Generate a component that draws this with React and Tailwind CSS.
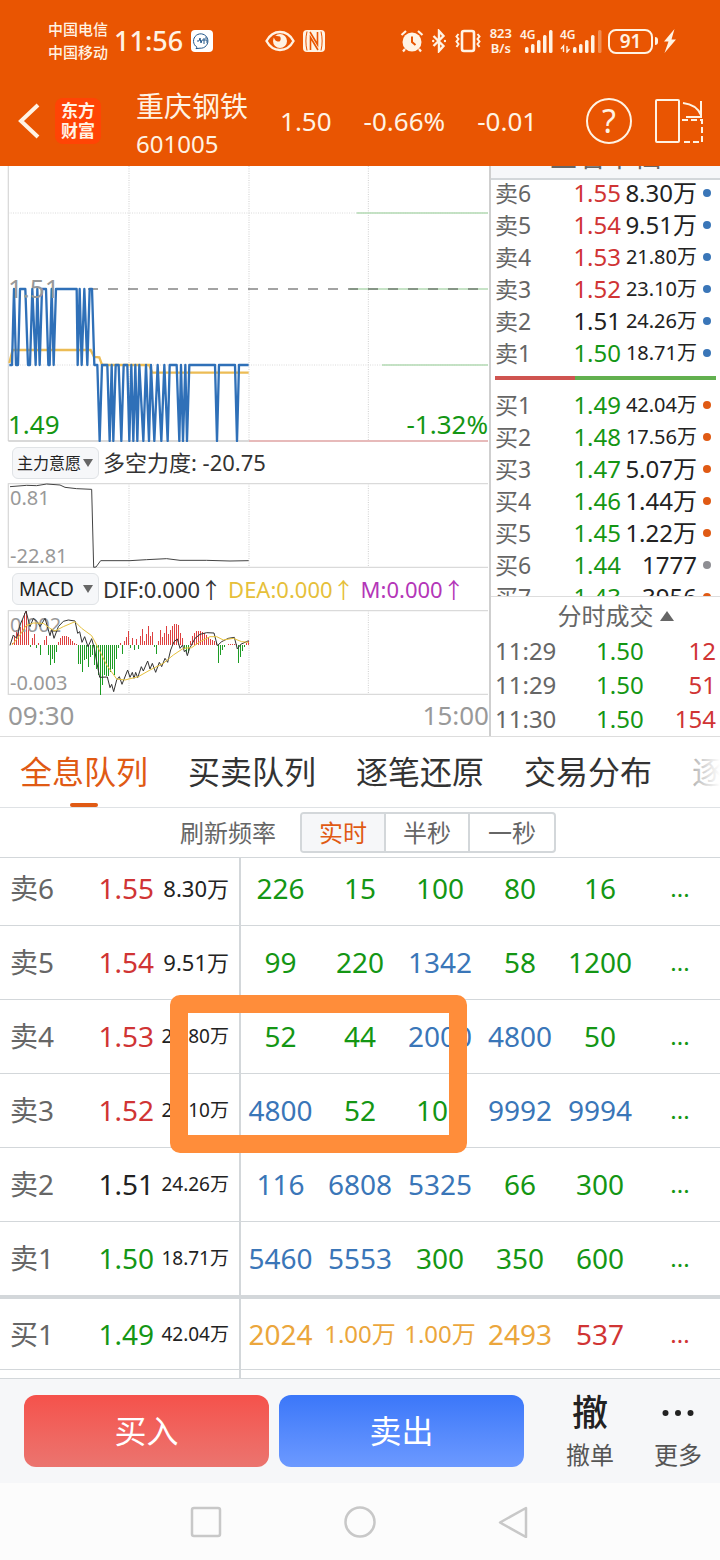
import React, { useState } from 'react';

const TONE = {
  up: 'text-[#d03434]',
  down: 'text-[#149614]',
  flat: 'text-[#222222]',
  big: 'text-[#3a76b8]',
  huge: 'text-[#eba63c]'
};

const ASKS = [
  { name: '卖6', price: '1.55', tone: 'up', volume: '8.30万' },
  { name: '卖5', price: '1.54', tone: 'up', volume: '9.51万' },
  { name: '卖4', price: '1.53', tone: 'up', volume: '21.80万' },
  { name: '卖3', price: '1.52', tone: 'up', volume: '23.10万' },
  { name: '卖2', price: '1.51', tone: 'flat', volume: '24.26万' },
  { name: '卖1', price: '1.50', tone: 'down', volume: '18.71万' }
];

const BIDS = [
  { name: '买1', price: '1.49', tone: 'down', volume: '42.04万' },
  { name: '买2', price: '1.48', tone: 'down', volume: '17.56万' },
  { name: '买3', price: '1.47', tone: 'down', volume: '5.07万' },
  { name: '买4', price: '1.46', tone: 'down', volume: '1.44万' },
  { name: '买5', price: '1.45', tone: 'down', volume: '1.22万' },
  { name: '买6', price: '1.44', tone: 'down', volume: '1777', idle: true },
  { name: '买7', price: '1.43', tone: 'down', volume: '3956' }
];

const TICKS = [
  ['11:29', '1.50', '12'],
  ['11:29', '1.50', '51'],
  ['11:30', '1.50', '154']
];

const QUEUES = {
  卖6: [['226', 'down'], ['15', 'down'], ['100', 'down'], ['80', 'down'], ['16', 'down'], ['...', 'down']],
  卖5: [['99', 'down'], ['220', 'down'], ['1342', 'big'], ['58', 'down'], ['1200', 'down'], ['...', 'down']],
  卖4: [['52', 'down'], ['44', 'down'], ['2000', 'big'], ['4800', 'big'], ['50', 'down'], ['...', 'down']],
  卖3: [['4800', 'big'], ['52', 'down'], ['100', 'down'], ['9992', 'big'], ['9994', 'big'], ['...', 'down']],
  卖2: [['116', 'big'], ['6808', 'big'], ['5325', 'big'], ['66', 'down'], ['300', 'down'], ['...', 'down']],
  卖1: [['5460', 'big'], ['5553', 'big'], ['300', 'down'], ['350', 'down'], ['600', 'down'], ['...', 'down']],
  买1: [['2024', 'huge'], ['1.00万', 'huge'], ['1.00万', 'huge'], ['2493', 'huge'], ['537', 'up'], ['...', 'up']]
};

const TABS = ['全息队列', '买卖队列', '逐笔还原', '交易分布', '逐'];
const RATES = ['实时', '半秒', '一秒'];

// price levels in chart units: 1.51, 1.50, 1.49
const T = 372;
const M = 600;
const B = 828;

const PRICE_POINTS = [
  [28, M], [36, M], [42, T], [48, M], [54, M], [60, T], [76, T], [84, M], [90, M], [97, T], [107, M], [112, T],
  [119, M], [126, T], [138, T], [145, M], [149, M], [155, T], [161, M], [168, T], [230, T], [233, M], [239, T],
  [245, M], [253, T], [262, M], [269, T], [276, T], [283, M], [292, M], [299, B], [306, M], [322, M], [329, B],
  [335, M], [340, B], [347, M], [356, M], [364, B], [371, M], [382, M], [388, B], [394, M], [400, B], [406, M],
  [412, B], [418, M], [430, B], [438, M], [447, B], [453, M], [463, B], [473, M], [484, B], [493, M], [503, B],
  [509, M], [530, M], [538, B], [543, M], [549, B], [556, M], [561, B], [568, M], [645, M], [651, B], [657, M],
  [705, M], [711, B], [717, M], [746, M]
];

const AVERAGE_POINTS = [
  [28, 594], [34, 570], [38, 555], [272, 555], [282, 576], [298, 577], [306, 600], [448, 600], [456, 623], [746, 623]
];

const FORCE_POINTS = [
  [30, 35], [80, 31], [110, 32], [140, 27], [180, 30], [195, 37], [230, 41], [275, 43], [281, 277], [288, 276],
  [302, 257], [390, 257], [440, 254], [500, 251], [540, 256], [620, 256], [690, 258], [746, 257]
];

const MACD_BARS = [
  8, 28, 46, 40, 56, 76, 96, 102, 58, -6, 22, 34, -8, 8, -28, 0, 15, 28, -28, -58, -40, -54, -20, 10, 22, 27, 28, 28,
  24, 20, 12, 8, 4, -55, -56, -80, -45, -40, -66, -35, -30, -60, -72, -90, -148, -120, -90, -92, -92, -80, -70, -88,
  -42, -8, 8, -26, 12, 25, 42, -8, 22, -14, 18, -12, 28, 50, 12, 34, 58, 28, 40, -6, -25, 12, 45, 25, 38, 58, 35, 45,
  58, 63, 64, 62, 38, 22, -12, -20, -24, 12, 28, 38, 42, 43, 42, 40, 36, 32, 26, 20, 16, 12, 8, -52, -30, -14, -4, 2,
  4, 5, 5, 5, 4, -52, -35, -16, -6, 8, 12
];

const DIF_POINTS = [
  [30, 511], [40, 480], [50, 490], [60, 450], [78, 408], [90, 455], [100, 430], [112, 440], [120, 455], [135, 430],
  [150, 482], [155, 462], [162, 490], [175, 455], [190, 439], [205, 435], [225, 438], [233, 475], [239, 470],
  [246, 502], [254, 485], [264, 515], [275, 491], [283, 520], [290, 560], [299, 607], [322, 606], [330, 638],
  [335, 628], [341, 650], [350, 615], [358, 605], [366, 628], [383, 585], [390, 607], [397, 592], [402, 610],
  [407, 592], [413, 608], [424, 575], [430, 588], [443, 558], [450, 582], [457, 565], [467, 592], [478, 562],
  [485, 575], [495, 550], [503, 562], [512, 525], [522, 500], [532, 492], [540, 520], [548, 510], [553, 530],
  [557, 525], [562, 542], [568, 522], [585, 490], [600, 478], [620, 473], [642, 474], [652, 512], [665, 500],
  [685, 490], [703, 487], [712, 522], [722, 508], [746, 497]
];

const DEA_POINTS = [
  [36, 510], [60, 480], [78, 452], [100, 444], [130, 445], [150, 460], [165, 468], [190, 455], [225, 440],
  [245, 460], [275, 482], [295, 520], [320, 570], [350, 612], [375, 615], [415, 605], [450, 585], [490, 565],
  [520, 540], [550, 520], [575, 518], [600, 500], [630, 485], [650, 485], [670, 495], [700, 490], [725, 500],
  [746, 502]
];

const toPoints = (list) => list.map((p) => p.join(',')).join(' ');

function StatusBar() {
  return (
    <div className="flex h-[82px] items-center pl-12 pr-11">
      <div className="text-[15px] leading-[23px] font-medium">
        <p>中国电信</p>
        <p>中国移动</p>
      </div>
      <span className="ml-1.5 text-[27px] font-medium">11:56</span>
      <svg className="ml-2 size-[22px]" viewBox="0 0 22 22" fill="none">
        <rect width="22" height="22" rx="4" fill="#fff" />
        <path d="M6 17.2A7.2 7.2 0 1 1 9 18.2L5 18.6Z" stroke="#24588a" strokeWidth="1" />
        <path d="M6 11h2l1-3 1 5 1-3h1M13 8v6M12 10h4v3M15 7v2" stroke="#24588a" strokeWidth="1" />
      </svg>

      <svg className="ml-[52px] h-[22px] w-[30px]" viewBox="0 0 30 22" fill="none">
        <path d="M1.5 11C5 4.500 10 2 15 2s10 2.500 13.500 9C25 17.500 20 20 15 20S5 17.500 1.500 11Z" stroke="currentColor" strokeWidth="2.400" />
        <circle cx="15" cy="11" r="7" fill="currentColor" />
        <path d="M9 5.500a5 5 0 0 0 3.500 6c3 .8 4-2.500 2.500-5Z" fill="#e95502" />
      </svg>
      <svg className="ml-2 size-[22px]" viewBox="0 0 22 22" fill="none">
        <rect width="22" height="22" rx="4" fill="currentColor" />
        <path d="M7.500 20V7.500L15 20M7 2l7.500 12.500V2" stroke="#e95502" strokeWidth="1.600" />
        <path d="M4 1.500c-1.500 6-1.500 13 0 19M18 1.500c1.500 6 1.500 13 0 19" stroke="#e95502" strokeWidth="1" />
      </svg>

      <svg className="ml-auto size-6" viewBox="0 0 24 24" fill="none">
        <circle cx="12" cy="13" r="9.500" fill="currentColor" />
        <path d="M12 7.500V13l3.500 3" stroke="#e95502" strokeWidth="2" />
        <path d="M1.500 6 6 2M22.500 6 18 2M5 20l-2 2.500M19 20l2 2.500" stroke="currentColor" strokeWidth="2.200" />
      </svg>
      <svg className="ml-2 h-6 w-3.5" viewBox="0 0 14 24" fill="none">
        <path d="M1.500 7l10 10L7 22V2l4.500 5-10 10" stroke="currentColor" strokeWidth="2.400" />
        <circle cx="13" cy="12" r="1.200" fill="currentColor" />
        <circle cx="1.200" cy="12" r="1.200" fill="currentColor" />
      </svg>
      <svg className="ml-2 h-6 w-7" viewBox="0 0 28 24" fill="none" stroke="currentColor">
        <rect x="8" y="2" width="12" height="20" rx="2" strokeWidth="2.600" />
        <path d="M4.500 5 2.500 7.500l2 2.500-2 2.500 2 2.500-2 3M23.500 5l2 2.500-2 2.500 2 2.500-2 2.500 2 3" strokeWidth="2" />
      </svg>
      <div className="ml-2 text-center text-[13px] leading-[15px] font-semibold">
        <p>823</p>
        <p>B/s</p>
      </div>
      <div className="relative ml-2 h-6 w-[34px]">
        <span className="absolute left-0 top-0 text-[12px] leading-[12px] font-semibold">4G</span>
        <svg className="size-full" viewBox="0 0 34 24" fill="currentColor">
          <rect x="5" y="18" width="3.500" height="6" rx="1.500" />
          <rect x="11" y="15" width="3.500" height="9" rx="1.500" />
          <rect x="17" y="11" width="3.500" height="13" rx="1.500" />
          <rect x="23" y="6" width="3.500" height="18" rx="1.500" />
          <rect x="29" y="1" width="3.500" height="23" rx="1.500" />
        </svg>
      </div>
      <div className="relative ml-1.5 h-6 w-[42px]">
        <span className="absolute left-0 top-0 text-[12px] leading-[12px] font-semibold">4G</span>
        <svg className="size-full" viewBox="0 0 42 24" fill="currentColor">
          <path d="M3.500 23v-6l-2.500 3M7 17v6l2.500-3" stroke="currentColor" strokeWidth="1.400" fill="none" />
          <rect x="13" y="18" width="3.500" height="6" rx="1.500" />
          <rect x="19" y="15" width="3.500" height="9" rx="1.500" />
          <rect x="25" y="11" width="3.500" height="13" rx="1.500" />
          <rect x="31" y="6" width="3.500" height="18" rx="1.500" />
          <rect x="38" y="1" width="3.500" height="23" rx="1.500" opacity="0.35" />
        </svg>
      </div>
      <span className="ml-1.5 flex h-[25px] w-[45px] items-center justify-center rounded-[8px] border-2 border-current text-[19px] leading-[20px] font-semibold">
        91
      </span>
      <span className="ml-0.5 h-2 w-[3px] rounded-r bg-current" />
      <svg className="ml-1.5 h-6 w-3" viewBox="0 0 12 24" fill="currentColor">
        <path d="M10.500 0 0 12.500h4.500L0.500 24 12 10.500H7.500Z" />
      </svg>
    </div>
  );
}

function TitleBar() {
  return (
    <div className="flex items-center pl-[18px] pr-4 pb-1.5 h-[84px]">
      <button type="button" aria-label="返回">
        <svg className="h-9 w-[22px]" viewBox="0 0 22 36" fill="none">
          <path d="M20 2 3 18l17 16" stroke="currentColor" strokeWidth="4" />
        </svg>
      </button>
      <div className="ml-[15px] grid size-[46px] place-content-center rounded-[8px] bg-[#ff4405] text-[17px] leading-[20px] font-bold">
        <p>东方</p>
        <p>财富</p>
      </div>
      <div className="ml-[35px] pt-2">
        <h1 className="text-[28px] leading-[38px]">重庆钢铁</h1>
        <p className="text-[24px] leading-[38px]">601005</p>
      </div>
      <div className="ml-8 flex gap-8 text-[26px]">
        <span>1.50</span>
        <span>-0.66%</span>
        <span>-0.01</span>
      </div>
      <button type="button" aria-label="帮助" className="ml-auto flex size-[46px] items-center justify-center rounded-full border-2 border-current text-[32px] leading-none">
        ?
      </button>
      <button type="button" aria-label="横屏" className="ml-[22px]">
        <svg className="h-[46px] w-[50px]" viewBox="0 0 50 46" fill="none" stroke="currentColor" strokeWidth="2">
          <rect x="2" y="2" width="23" height="42" rx="1" />
          <path d="M29 5c9 1 15 5 18 12M47 3v16H32" />
          <path d="M28 22h20v22H28" strokeDasharray="6 3" />
        </svg>
      </button>
    </div>
  );
}

function ChartGrid({ top, bottom }) {
  return (
    <g stroke="#cfcfcf" strokeWidth="3">
      <path d={`M387 ${top}V${bottom}M747 ${top}V${bottom}M1105 ${top}V${bottom}`} strokeDasharray="3 4" />
      <path d={`M25 ${top}V${bottom}`} stroke="#dadada" strokeWidth="4" />
    </g>
  );
}

function PriceChart() {
  return (
    <svg className="block w-full" viewBox="0 3 1467 828" fill="none">
      <ChartGrid top={3} bottom={828} />
      <path d="M25 144H1464M25 600H1464" stroke="#dadada" strokeWidth="3" strokeDasharray="3 4" />
      <path d="M1070 144H1464M1048 372H1464M1146 600H1464" stroke="#b4dab4" strokeWidth="5" />
      <path d="M264 372H1464" stroke="#444" strokeOpacity="0.65" strokeWidth="5" strokeDasharray="30 30" />
      <path d="M25 828H747" stroke="#cccccc" strokeWidth="5" />
      <path d="M747 828H1464" stroke="#dfa3a3" strokeWidth="5" />
      <polyline points={toPoints(AVERAGE_POINTS)} stroke="#ecbc55" strokeWidth="7" />
      <polyline points={toPoints(PRICE_POINTS)} stroke="#2f70b8" strokeWidth="7" strokeLinejoin="round" />
      <g fontSize="78">
        <text x="24" y="400" fill="#999999">1.51</text>
        <text x="24" y="806" fill="#149614">1.49</text>
        <text x="1464" y="806" textAnchor="end" fill="#149614">-1.32%</text>
      </g>
    </svg>
  );
}

function ForceChart() {
  return (
    <svg className="block w-full" viewBox="0 24 1467 255" fill="none">
      <ChartGrid top={25} bottom={278} />
      <path d="M24 26H1464M24 277H1464" stroke="#dadada" strokeWidth="4" />
      <polyline points={toPoints(FORCE_POINTS)} stroke="#444" strokeWidth="3" />
      <g fontSize="60" fill="#999999">
        <text x="30" y="90">0.81</text>
        <text x="30" y="264">-22.81</text>
      </g>
    </svg>
  );
}

function MacdChart() {
  return (
    <svg className="block w-full" viewBox="0 405 1467 255" fill="none">
      <ChartGrid top={406} bottom={660} />
      <path d="M24 407H1464M24 658H1464" stroke="#dadada" strokeWidth="4" />
      {MACD_BARS.map((value, i) => (
        <rect
          key={i}
          x={36 + i * 6}
          y={value > 0 ? 511 - value : 511}
          width="3"
          height={Math.abs(value)}
          fill={value > 0 ? '#dd4040' : '#1c9c24'}
          shapeRendering="crispEdges"
        />
      ))}
      <g fontSize="60" fill="#999999">
        <text x="30" y="471">0.002</text>
        <text x="30" y="645">-0.003</text>
      </g>
      <polyline points={toPoints(DIF_POINTS)} stroke="#333" strokeWidth="3" />
      <polyline points={toPoints(DEA_POINTS)} stroke="#e6c13c" strokeWidth="3" />
    </svg>
  );
}

function IndicatorSelect({ label, value, size }) {
  return (
    <label className="relative block h-8 w-[87px] shrink-0">
      <select
        aria-label={label}
        className={`size-full appearance-none rounded-md border border-[#e0e3e6] bg-[#f6f7f9] text-[#222222] ${size}`}
      >
        <option>{value}</option>
      </select>
      <svg className="pointer-events-none absolute right-1.5 top-3 h-2 w-2.5" viewBox="0 0 10 8">
        <path d="M0 0h10L5 8Z" fill="#666" />
      </svg>
    </label>
  );
}

function BookTable({ rows, side }) {
  return (
    <table className="w-full table-fixed leading-[32px]">
      <colgroup>
        <col className="w-[70px]" />
        <col />
        <col className="w-[76px]" />
        <col className="w-[23px]" />
      </colgroup>
      <tbody>
        {rows.map((row) => (
          <tr key={row.name} className="h-8">
            <td className="p-0 pl-1 text-[23px] text-[#666666]">{row.name}</td>
            <td className={`p-0 text-right text-[24px] ${TONE[row.tone]}`}>{row.price}</td>
            <td className={`p-0 text-right whitespace-nowrap text-[#222222] ${row.volume.length > 5 ? 'text-[20px]' : 'text-[24px]'}`}>
              {row.volume}
            </td>
            <td className="p-0 pl-1.5 align-middle">
              <span
                className={`block size-2 rounded-full ${
                  row.idle ? 'bg-[#8e8e93]' : side === 'ask' ? 'bg-[#3a76b8]' : 'bg-[#e05a14]'
                }`}
              />
            </td>
          </tr>
        ))}
      </tbody>
    </table>
  );
}

function OrderBook() {
  return (
    <aside className="w-[231px] shrink-0 border-l-2 border-[#cfcfcf]">
      <div className="h-[430px] overflow-hidden">
        <div className="flex h-3.5 items-end justify-center overflow-hidden border-b-2 border-[#d3d7da] bg-[#f6f7f9] pb-2">
          <span className="text-[28px] leading-[28px] text-[#666666]">查看千档</span>
        </div>
        <div className="-mt-[3px]">
          <BookTable rows={ASKS} side="ask" />
        </div>
        <div className="mx-1 mt-[7px] mb-[9px] flex h-1 bg-[#62b04f]">
          <div className="w-[36%] bg-[#cf5450]" />
        </div>
        <BookTable rows={BIDS} side="bid" />
      </div>
      <button type="button" className="flex h-[38px] w-full items-center justify-center gap-1.5 border-t border-[#dddddd] pl-5 text-[24px] text-[#666666]">
        分时成交
        <svg className="h-2.5 w-3.5" viewBox="0 0 14 10">
          <path d="M7 0l7 10H0Z" fill="#666" />
        </svg>
      </button>
      <table className="w-full table-fixed text-[24px] leading-[34px]">
        <tbody>
          {TICKS.map(([time, price, amount], i) => (
            <tr key={i}>
              <td className="p-0 pl-1 text-[#666666]">{time}</td>
              <td className="p-0 text-right text-[#149614]">{price}</td>
              <td className="p-0 pr-1 text-right text-[#d03434]">{amount}</td>
            </tr>
          ))}
        </tbody>
      </table>
    </aside>
  );
}

function amountSize(amount) {
  return amount.includes('万') || amount === '...' ? 'text-[24px]' : '';
}

function QueueRow({ row }) {
  const height =
    row.name === '卖1' ? 'h-[76px] border-b-4' : row.name === '买1' ? 'h-[72px] border-b' : 'h-[74px] border-b';
  return (
    <tr className={`border-[#d3d7da] ${height}`}>
      <td className="p-0 pl-2.5 text-[#666666]">{row.name}</td>
      <td className={`p-0 pr-1.5 text-right ${TONE[row.tone]}`}>{row.price}</td>
      <td
        className={`border-r-2 border-[#d3d7da] p-0 pr-2.5 text-right whitespace-nowrap text-[#222222] ${
          row.volume.length > 5 ? 'text-[19px]' : 'text-[22px]'
        }`}
      >
        {row.volume}
      </td>
      {QUEUES[row.name].map(([amount, tone], i) => (
        <td key={i} className={`p-0 text-center whitespace-nowrap ${TONE[tone]} ${amountSize(amount)}`}>
          {amount}
        </td>
      ))}
    </tr>
  );
}

export default function App() {
  const [tab, setTab] = useState(TABS[0]);
  const [rate, setRate] = useState(RATES[0]);

  return (
    <div className="min-h-screen bg-white font-['Noto_Sans','Noto_Sans_CJK_SC',sans-serif]">
      <header className="bg-[#e95502] text-[#fff3e4]">
        <StatusBar />
        <TitleBar />
      </header>

      <section className="flex border-b border-[#dddddd]">
        <div className="min-w-0 flex-1">
          <PriceChart />
          <div className="flex h-[41px] items-center gap-1 pl-3">
            <IndicatorSelect label="指标一" value="主力意愿" size="pl-1 text-[16px]" />
            <span className="text-[22px] whitespace-nowrap text-[#333333]">多空力度: -20.75</span>
          </div>
          <ForceChart />
          <div className="flex h-[42px] items-center gap-1 pl-3">
            <IndicatorSelect label="指标二" value="MACD" size="pl-1.5 text-[19px]" />
            <div className="flex gap-1.5 text-[22px] whitespace-nowrap">
              <span className="text-[#333333]">DIF:0.000↑</span>
              <span className="text-[#e6bf3a]">DEA:0.000↑</span>
              <span className="text-[#b436b8]">M:0.000↑</span>
            </div>
          </div>
          <MacdChart />
          <div className="flex h-[41px] items-center justify-between pl-2 text-[26px] text-[#999999]">
            <span>09:30</span>
            <span>15:00</span>
          </div>
        </div>
        <OrderBook />
      </section>

      <nav className="relative flex h-[71px] gap-10 overflow-hidden border-b border-[#dfe2e5] pl-5">
        {TABS.map((name) => (
          <button
            key={name}
            type="button"
            onClick={() => setTab(name)}
            className={`relative shrink-0 text-[32px] ${
              tab === name ? 'text-[#e05a14]' : name === '逐' ? 'text-[#aaaaaa]' : 'text-[#333333]'
            }`}
          >
            {name}
            {tab === name && <span className="absolute bottom-0 left-1/2 h-1 w-7 -translate-x-1/2 rounded bg-[#e05a14]" />}
          </button>
        ))}
        <div className="pointer-events-none absolute inset-y-0 right-0 w-8 bg-linear-to-r from-transparent to-white" />
      </nav>

      <div className="flex h-[50px] items-center justify-center gap-6 border-b border-[#d3d7da] pl-4 text-[24px]">
        <span className="text-[#666666]">刷新频率</span>
        <div className="flex h-[41px] divide-x-2 divide-[#d3d7da] overflow-hidden rounded-sm border-2 border-[#d3d7da]">
          {RATES.map((name) => (
            <button
              key={name}
              type="button"
              onClick={() => setRate(name)}
              className={`w-[84px] ${rate === name ? 'bg-[#f6f7f9] text-[#e05a14]' : 'text-[#666666]'}`}
            >
              {name}
            </button>
          ))}
        </div>
      </div>

      <div className="relative h-[521px] overflow-hidden border-b border-[#d3d7da]">
        <table className="-mt-[7px] w-full table-fixed border-collapse text-[28px] leading-[36px]">
          <tbody>
            {ASKS.map((row) => (
              <QueueRow key={row.name} row={row} />
            ))}
            <QueueRow row={BIDS[0]} />
            <tr className="h-4">
              <td colSpan={3} className="border-r-2 border-[#d3d7da]" />
              <td colSpan={6} />
            </tr>
          </tbody>
        </table>
        <div className="absolute left-[170px] top-[137px] h-[158px] w-[297px] rounded-[10px] border-[18px] border-[#ff8d3a]" />
      </div>

      <div className="flex h-[104px] items-center bg-[#f6f7f9] pl-6 pr-[18px]">
        <div className="flex flex-1 gap-2.5 text-[32px] text-white">
          <button type="button" className="h-[72px] flex-1 rounded-[12px] bg-linear-to-b from-[#f5514b] to-[#eb746f]">
            买入
          </button>
          <button type="button" className="h-[72px] flex-1 rounded-[12px] bg-linear-to-b from-[#3b77f9] to-[#6c99ff]">
            卖出
          </button>
        </div>
        <button type="button" className="ml-[42px] w-12 text-[24px] text-[#555555]">
          <span className="block text-[36px] leading-[48px] font-medium text-[#222222]">撤</span>
          <span className="block leading-[36px]">撤单</span>
        </button>
        <button type="button" className="ml-10 w-12 text-[24px] text-[#555555]">
          <svg className="mx-auto h-12 w-8" viewBox="0 0 32 48" fill="#222">
            <circle cx="3.500" cy="24" r="3" />
            <circle cx="16" cy="24" r="3" />
            <circle cx="28.500" cy="24" r="3" />
          </svg>
          <span className="block leading-[36px]">更多</span>
        </button>
      </div>

      <div className="flex h-[77px] items-center justify-center gap-[122px] bg-[#fcfcfc] text-[#c8c8c8]">
        <button type="button" aria-label="最近任务">
          <svg className="size-8" viewBox="0 0 32 32" fill="none" stroke="currentColor" strokeWidth="2.500">
            <rect x="2" y="2" width="28" height="28" rx="2" />
          </svg>
        </button>
        <button type="button" aria-label="主屏幕">
          <svg className="size-8" viewBox="0 0 32 32" fill="none" stroke="currentColor" strokeWidth="2.500">
            <circle cx="16" cy="16" r="14.500" />
          </svg>
        </button>
        <button type="button" aria-label="后退">
          <svg className="size-8" viewBox="0 0 32 32" fill="none" stroke="currentColor" strokeWidth="2.500" strokeLinejoin="round">
            <path d="M28 2v29L2 16.500Z" />
          </svg>
        </button>
      </div>
    </div>
  );
}
